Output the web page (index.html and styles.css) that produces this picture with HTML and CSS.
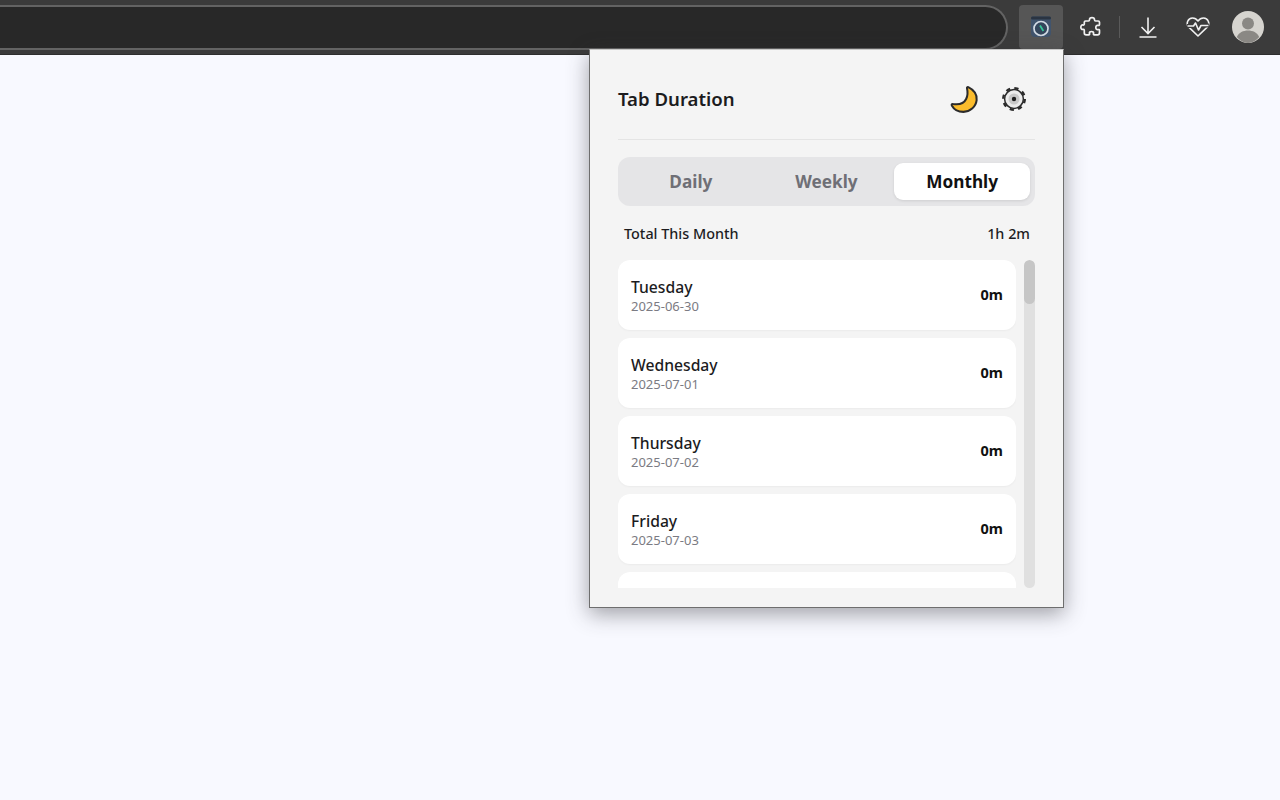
FILE: index.html
```html
<!DOCTYPE html>
<html lang="en">
<head>
<meta charset="utf-8">
<title>Tab Duration</title>
<link rel="stylesheet" href="styles.css">
</head>
<body>
<header class="toolbar">
  <div class="omnibox"></div>
  <div class="tb-icons">
    <div class="tb-btn active">
      <svg width="24" height="24" viewBox="0 0 24 24"><path d="M2 3.500a2 2 0 0 1 2-2h16a2 2 0 0 1 2 2V18a4 4 0 0 1-4 4H6a4 4 0 0 1-4-4z" fill="#41546d"/><rect x="2" y="1.500" width="20" height="3" rx="1.500" fill="#2a3442"/><circle cx="12" cy="13.500" r="7" fill="#34465c" stroke="#d3dbe4" stroke-width="1.700"/><path d="M11 10.500l3.400 5.400" stroke="#37c79a" stroke-width="1.800"/></svg>
    </div>
    <div class="tb-btn">
      <svg width="24" height="24" viewBox="0 0 24 24" fill="none" stroke="#f1f1f1" stroke-width="1.700" stroke-linejoin="round"><path d="M9.500 4.800c0-3 5-3 5 0 0 .7.400 1.200 1.100 1.200h2.600c.7 0 1.300.6 1.300 1.300v2.300c0 .8-.9 1-1.500.8-2.900-.8-2.900 5 0 4.200.6-.2 1.500 0 1.500.8v2.300c0 1.100-.9 2.200-2 2.200h-3.200c-.8 0-1-.8-.8-1.400.9-2.700-4.900-2.700-4 0 .2.600 0 1.400-.8 1.400H6.200c-1 0-1.900-.9-1.900-1.900v-2.700c0-.7-.6-1.100-1.200-.9-3 .8-3-5.200 0-4.400.6.200 1.200-.2 1.200-.9V7.300C4.300 6.600 4.900 6 5.600 6h2.800c.7 0 1.100-.5 1.100-1.200z"/></svg>
    </div>
    <span class="tb-sep"></span>
    <div class="tb-btn">
      <svg width="24" height="24" viewBox="0 0 24 24" fill="none" stroke="#f1f1f1" stroke-width="1.600"><path d="M12 2.500v15.500M5.500 12l6.500 6.500 6.500-6.500M3.500 22h17"/></svg>
    </div>
    <div class="tb-btn">
      <svg width="26" height="24" viewBox="0 0 26 24" fill="none" stroke="#f1f1f1" stroke-width="1.600" stroke-linejoin="round"><path d="M13 21L3.800 12.200C.5 8.500 3 3 7.500 3c2.500 0 4.300 1.300 5.500 3 1.200-1.700 3-3 5.500-3 4.500 0 7 5.500 3.700 9.200z"/><path d="M2 11h6.500l2-3 3 7 2.500-4.500h8" stroke="#3b3b3b" stroke-width="4"/><path d="M2.500 11h6l2-3 3 7 2.500-4.500h7.500"/></svg>
    </div>
    <div class="avatar">
      <svg width="32" height="32" viewBox="0 0 32 32"><circle cx="16" cy="16" r="16" fill="#d6d4cf"/><circle cx="16" cy="12.500" r="6" fill="#8a8884"/><path d="M4.800 26c2-4.500 6.500-6.500 11.200-6.500s9.200 2 11.200 6.500A16 16 0 0 1 16 32 16 16 0 0 1 4.800 26z" fill="#8a8884"/></svg>
    </div>
  </div>
</header>

<section class="popup">
  <div class="popup-head">
    <h1 class="title">Tab Duration</h1>
    <div class="head-actions">
      <svg class="moon" width="30" height="30" viewBox="0 0 28 28"><path d="M18 3C23 5.500 26.300 10 25.800 15 25 21.500 19.500 26 13.500 26 8.500 26 4.500 23.500 2.600 20 2.200 19 2.800 18.500 3.800 18.700 9 19.500 14 18 16 14 17.500 11 17.500 7 16.800 4 16.600 3 17.200 2.600 18 3z" fill="#fbbc2c" stroke="#2b2b2b" stroke-width="1.900" stroke-linejoin="round"/></svg>
      <svg class="gear" width="26" height="26" viewBox="0 0 26 26" fill="none"><circle cx="13" cy="13" r="10.800" stroke="#2b2b2b" stroke-width="2.400" stroke-dasharray="4.200 4.283"/><circle cx="13" cy="13" r="9.400" fill="#ececec" stroke="#2b2b2b" stroke-width="1.500"/><circle cx="13" cy="13" r="5.500" fill="#c9c9c9"/><circle cx="13" cy="13" r="2.200" fill="#1f1f1f"/></svg>
    </div>
  </div>

  <nav class="tabs">
    <div class="tab">Daily</div>
    <div class="tab">Weekly</div>
    <div class="tab on">Monthly</div>
  </nav>

  <div class="total">
    <span>Total This Month</span>
    <span>1h 2m</span>
  </div>

  <div class="list-wrap">
    <div class="list">
      <div class="card"><div><div class="day">Tuesday</div><div class="date">2025-06-30</div></div><div class="dur">0m</div></div>
      <div class="card"><div><div class="day">Wednesday</div><div class="date">2025-07-01</div></div><div class="dur">0m</div></div>
      <div class="card"><div><div class="day">Thursday</div><div class="date">2025-07-02</div></div><div class="dur">0m</div></div>
      <div class="card"><div><div class="day">Friday</div><div class="date">2025-07-03</div></div><div class="dur">0m</div></div>
      <div class="card"></div>
    </div>
    <div class="scroll"><div class="thumb"></div></div>
  </div>
</section>
</body>
</html>
```
FILE: styles.css
```css
* { box-sizing: border-box; }
html, body { margin: 0; height: 100%; }
body {
  background: #f8f9ff;
  font-family: "Noto Sans", "Open Sans", sans-serif;
  overflow: hidden;
  position: relative;
}
.toolbar {
  height: 55px;
  background: #3b3b3b;
  border-bottom: 1px solid #2e2e2e;
  display: flex;
  align-items: flex-start;
  padding-top: 5px;
}
.omnibox {
  width: 1008px;
  height: 45px;
  background: #282828;
  border: 2px solid #636363;
  border-left: 0;
  border-radius: 0 23px 23px 0;
}
.tb-icons {
  display: flex;
  align-items: center;
  margin-left: 11px;
  height: 44px;
}
.tb-btn {
  width: 44px;
  height: 44px;
  display: flex;
  align-items: center;
  justify-content: center;
  border-radius: 4px;
}
.tb-btn svg { filter: blur(.35px); }
.tb-btn.active { background: #565656; }
.tb-btn + .tb-btn { margin-left: 6px; }
.tb-icons > .tb-btn:nth-child(2) { margin-left: 7px; }
.tb-sep {
  width: 1px;
  height: 22px;
  background: #5a5a5a;
  margin: 0 6px 0 5px;
}
.avatar {
  width: 32px;
  height: 32px;
  margin-left: 12px;
}
.avatar svg { display: block; filter: blur(.35px); }
.popup {
  position: absolute;
  left: 589px;
  top: 49px;
  width: 475px;
  height: 559px;
  background: #f4f4f4;
  border: 1px solid #6e6e6e;
  border-top-color: #c8c8c8;
  box-shadow: 0 6px 20px rgba(50, 52, 58, .45);
  padding: 0 28px;
}
.popup-head {
  height: 90px;
  padding-top: 7px;
  display: flex;
  align-items: center;
  justify-content: space-between;
  border-bottom: 1px solid #e4e4e4;
}
.title {
  margin: 0;
  font-size: 18.600px;
  font-weight: 600;
  color: #1c1c1e;
}
.head-actions {
  display: flex;
  align-items: center;
  gap: 22px;
  margin-right: 8px;
  padding-top: 1px;
}
.head-actions svg { display: block; }
.tabs {
  margin-top: 17px;
  height: 49px;
  background: #e5e5e7;
  border-radius: 12px;
  display: flex;
  padding: 6px 5px;
}
.tab {
  flex: 1;
  display: flex;
  align-items: center;
  justify-content: center;
  padding-bottom: 1px;
  font-size: 17.200px;
  font-weight: 700;
  color: #6f6f76;
  border-radius: 9px;
}
.tab.on {
  background: #fff;
  color: #111;
  box-shadow: 0 1px 3px rgba(0, 0, 0, .1);
}
.total {
  display: flex;
  justify-content: space-between;
  padding: 0 5px 0 6px;
  margin-top: 17px;
  height: 21px;
  line-height: 21px;
  font-size: 14.400px;
  font-weight: 500;
  color: #1c1c1e;
}
.list-wrap {
  margin-top: 16px;
  display: flex;
  justify-content: space-between;
  height: 328px;
}
.list {
  width: 398px;
  overflow: hidden;
  display: flex;
  flex-direction: column;
  gap: 8px;
}
.card {
  flex: none;
  height: 70px;
  background: #fff;
  border-radius: 12px;
  padding: 2px 13px 0;
  display: flex;
  align-items: center;
  justify-content: space-between;
  box-shadow: 0 1px 2px rgba(0, 0, 0, .04);
}
.day {
  font-size: 15.700px;
  line-height: 20px;
  font-weight: 500;
  color: #1c1c1e;
}
.date {
  margin: 1px 0;
  font-size: 13px;
  line-height: 16px;
  color: #7b7b83;
}
.dur {
  margin-bottom: 4px;
  font-size: 14.500px;
  font-weight: 700;
  color: #111;
}
.scroll {
  width: 11px;
  height: 100%;
  background: #e0e0e0;
  border-radius: 6px;
  overflow: hidden;
}
.thumb {
  height: 44px;
  background: #c6c6c6;
  border-radius: 6px;
}
```
